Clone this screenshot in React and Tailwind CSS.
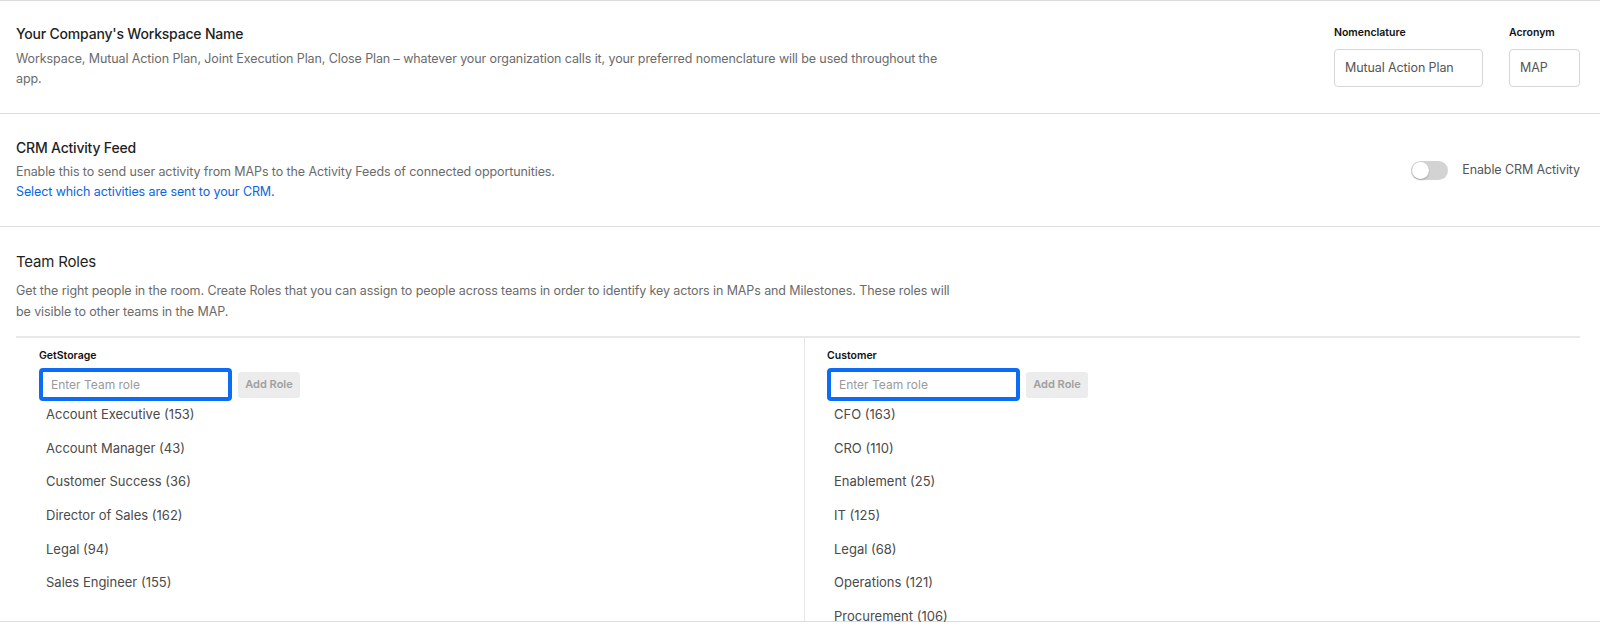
import React from "react";

const leftRoles = [
    "Account Executive (153)",
    "Account Manager (43)",
    "Customer Success (36)",
    "Director of Sales (162)",
    "Legal (94)",
    "Sales Engineer (155)",
];

const rightRoles = [
    "CFO (163)",
    "CRO (110)",
    "Enablement (25)",
    "IT (125)",
    "Legal (68)",
    "Operations (121)",
    "Procurement (106)",
];

const RoleColumn = ({ team, roles, className }) => {
    return (
        <div className={`pt-[11px] ${className}`}>
            <div className="text-[10.5px] leading-[14px] font-semibold text-[#111]">{team}</div>
            <div className="flex items-center gap-[6px] mt-[5px]">
                <div className="w-[193px] h-[33px] border-4 border-[#0b6cf6] rounded-[4px] flex items-center px-2 bg-white">
                    <input
                        placeholder="Enter Team role"
                        className="w-full outline-none text-[12px] text-[#333] placeholder-[#9a9a9a] bg-transparent"
                    />
                </div>
                <button className="h-[26px] w-[62px] rounded-[3px] bg-[#ececec] text-[#a0a0a0] text-[11px] font-semibold">
                    Add Role
                </button>
            </div>
            <ul className="flex flex-col gap-[17.7px] mt-[5px] pl-[7px]">
                {roles.map((r) => (
                    <li key={r} className="text-[13px] leading-4 text-[#4a4a4a]">
                        {r}
                    </li>
                ))}
            </ul>
        </div>
    );
};

export default function App() {
    return (
        <div className="w-[1600px] h-[643px] bg-white font-['Inter',sans-serif] overflow-hidden">
            {/* workspace name */}
            <section className="border-t border-b border-[#dcdcdc] h-[114px] pl-4 pr-5 flex justify-between">
                <div className="pt-[23px]">
                    <h2 className="text-[14px] leading-5 font-medium tracking-[-0.2px] text-[#1f1f1f]">Your Company's Workspace Name</h2>
                    <p className="mt-[5px] w-[930px] text-[12.5px] leading-5 tracking-[-0.1px] text-[#6b6b6b]">
                        Workspace, Mutual Action Plan, Joint Execution Plan, Close Plan – whatever your organization calls it, your preferred nomenclature will be used throughout the app.
                    </p>
                </div>
                <div className="flex gap-[26px] pt-[25px]">
                    <div>
                        <div className="text-[10.5px] leading-[14px] font-semibold text-[#111]">Nomenclature</div>
                        <div className="mt-[9px] w-[149px] h-[38px] border border-[#d6d6d6] rounded-[4px] flex items-center px-[10px] text-[12.5px] tracking-[-0.1px] text-[#555]">
                            Mutual Action Plan
                        </div>
                    </div>
                    <div>
                        <div className="text-[10.5px] leading-[14px] font-semibold text-[#111]">Acronym</div>
                        <div className="mt-[9px] w-[71px] h-[38px] border border-[#d6d6d6] rounded-[4px] flex items-center px-[10px] text-[12.5px] tracking-[-0.1px] text-[#555]">
                            MAP
                        </div>
                    </div>
                </div>
            </section>

            {/* crm activity */}
            <section className="border-b border-[#dcdcdc] h-[113px] pl-4 pr-5 flex justify-between items-center">
                <div>
                    <h2 className="text-[14px] leading-5 font-medium tracking-[-0.2px] text-[#1f1f1f]">CRM Activity Feed</h2>
                    <p className="mt-[4px] text-[12.5px] leading-5 tracking-[-0.1px] text-[#6b6b6b]">
                        Enable this to send user activity from MAPs to the Activity Feeds of connected opportunities.
                    </p>
                    <a href="#" className="block text-[12.5px] leading-5 tracking-[-0.1px] text-[#0a66e0]">
                        Select which activities are sent to your CRM.
                    </a>
                </div>
                <div className="flex items-center gap-[14px]">
                    <div className="w-[37px] h-[19px] rounded-full bg-[#d3d3d3] p-[1px] flex items-center">
                        <div className="w-[17px] h-[17px] rounded-full bg-white shadow-[0_1px_2px_rgba(0,0,0,0.25)]"></div>
                    </div>
                    <span className="text-[12.5px] tracking-[-0.1px] text-[#555]">Enable CRM Activity</span>
                </div>
            </section>

            {/* team roles */}
            <section className="border-b border-[#dcdcdc] pl-4 pr-5">
                <div className="pt-[25px]">
                    <h2 className="text-[15px] leading-5 tracking-[-0.2px] text-[#1f1f1f]">Team Roles</h2>
                    <p className="mt-[8px] w-[948px] text-[12.5px] leading-[21px] tracking-[-0.1px] text-[#6b6b6b]">
                        Get the right people in the room. Create Roles that you can assign to people across teams in order to identify key actors in MAPs and Milestones. These roles will be visible to other teams in the MAP.
                    </p>
                </div>
                <div className="mt-[14px] border-t-2 border-[#e8e8e8] h-[285px] flex">
                    <RoleColumn team="GetStorage" roles={leftRoles} className="w-[788px] pl-[23px]" />
                    <RoleColumn team="Customer" roles={rightRoles} className="flex-1 pl-[22px] border-l border-[#e6e6e6]" />
                </div>
            </section>
        </div>
    );
}
